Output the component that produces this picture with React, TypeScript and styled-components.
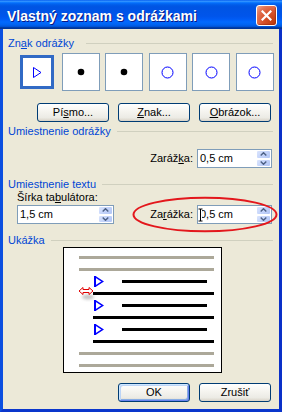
import React from 'react';
import styled, { createGlobalStyle, css } from 'styled-components';

const Global = createGlobalStyle`
  html, body { margin: 0; padding: 0; background: #ECE9D8; overflow: hidden; }
  body { font-family: "Liberation Sans", Arial, sans-serif; font-size: 11px; }
  * { box-sizing: border-box; }
`;

const Window = styled.div`
  position: relative;
  width: 282px;
  height: 412px;
  display: flex;
  flex-direction: column;
  font-family: "Liberation Sans", Arial, sans-serif;
  font-size: 11px;
  color: #000;
  overflow: hidden;
`;

const TitleBar = styled.div`
  height: 29px;
  flex: none;
  display: flex;
  align-items: flex-start;
  justify-content: space-between;
  padding: 0 5px 0 7px;
  background: linear-gradient(
    to bottom,
    #0058ee 0%, #3593ff 4%, #288eff 6%, #127dff 8%, #036ffc 10%,
    #0262ee 14%, #0057e5 20%, #0054e3 24%, #0055eb 56%, #005bf5 66%,
    #026afe 76%, #0062ef 86%, #0052d6 92%, #0040ab 94%, #003092 100%
  );
`;

const TitleText = styled.span`
  margin-top: 8px;
  color: #fff;
  font-weight: bold;
  font-size: 14px;
  line-height: 16px;
  white-space: nowrap;
  text-shadow: 1px 1px 0 #0a1883;
`;

const CloseButton = styled.div`
  margin-top: 5px;
  width: 21px;
  height: 21px;
  flex: none;
  border: 1px solid #fff;
  border-radius: 3px;
  display: flex;
  align-items: center;
  justify-content: center;
  background: radial-gradient(circle at 85% 85%, #c23d10 0%, #d9532c 45%, #e27556 75%, #f0ab96 100%);
  box-shadow: inset -1px -1px 1px rgba(120, 20, 0, 0.4);
`;

const Body = styled.div`
  flex: 1;
  display: flex;
  flex-direction: column;
  background: #ece9d8;
  border-left: 3px solid #0b4fe0;
  border-right: 3px solid #0a30c8;
  border-bottom: 3px solid #0a36cc;
  padding: 0 6px 0 5px;
`;

const GroupHeader = styled.div<{ $mt: number }>`
  display: flex;
  align-items: flex-start;
  height: 14px;
  margin-top: ${(p) => p.$mt}px;
`;

const GroupLabel = styled.span`
  color: #0046d5;
  line-height: 14px;
  white-space: nowrap;
`;

const GroupRule = styled.div<{ $gap: number }>`
  flex: 1;
  height: 1px;
  margin-top: 7px;
  margin-left: ${(p) => p.$gap}px;
  background: #d0d0bf;
`;

const Key = styled.span`
  text-decoration: underline;
  text-underline-offset: 1px;
`;

const BulletRow = styled.div`
  display: flex;
  gap: 5.5px;
  margin: 3px 0 0 10px;
`;

const BulletCell = styled.div<{ $selected?: boolean }>`
  width: 38px;
  height: 38px;
  flex: none;
  display: flex;
  align-items: center;
  justify-content: center;
  background: #fff;
  border: 1px solid #7f9db9;
  ${(p) =>
    p.$selected &&
    css`
      width: 34px;
      height: 34px;
      margin: 2px;
      border: 3px solid #316ac5;
    `}
`;

const ButtonRow = styled.div<{ $mt: number }>`
  display: flex;
  justify-content: flex-end;
  gap: 9px;
  padding-right: 2px;
  margin-top: ${(p) => p.$mt}px;
`;

const XPButton = styled.div<{ $default?: boolean }>`
  width: 72px;
  height: 19px;
  flex: none;
  border: 1px solid #003c74;
  border-radius: 3px;
  display: flex;
  align-items: center;
  justify-content: center;
  line-height: 17px;
  color: #000;
  white-space: nowrap;
  background: linear-gradient(180deg, #ffffff 0%, #f5f4ef 45%, #ecebe5 80%, #d8d2c6 100%);
  ${(p) =>
    p.$default &&
    css`
      box-shadow: inset 1px 1px 0 #cee7ff, inset -1px -1px 0 #6982ee, inset 2px 2px 0 #bcd4f6, inset -2px -2px 0 #89ade4;
    `}
`;

const FieldRow = styled.div<{ $mt?: number }>`
  display: flex;
  flex: none;
  align-items: center;
  justify-content: flex-end;
  gap: 4px;
  padding-right: 1px;
  margin-top: ${(p) => p.$mt ?? 0}px;
`;

const FieldLabel = styled.span`
  flex: none;
  line-height: 13px;
  white-space: nowrap;
`;

const SpinBox = styled.div<{ $w: number }>`
  width: ${(p) => p.$w}px;
  height: 19px;
  flex: none;
  display: flex;
  border: 1px solid #7f9db9;
  background: #fff;
`;

const SpinValue = styled.div`
  position: relative;
  flex: 1;
  padding-left: 2px;
  line-height: 17px;
  white-space: nowrap;
`;

const SpinArrows = styled.div`
  width: 15px;
  flex: none;
  display: flex;
  flex-direction: column;
`;

const SpinArrow = styled.div`
  flex: 1;
  display: flex;
  align-items: center;
  justify-content: center;
  border: 1px solid #fff;
  border-radius: 2px;
  background: linear-gradient(135deg, #dbe5fd 0%, #c3d3fa 50%, #b1c5f5 100%);
`;

const TextSection = styled.div`
  display: flex;
  align-items: flex-end;
  justify-content: space-between;
`;

const TabColumn = styled.div`
  display: flex;
  flex: none;
  flex-direction: column;
  gap: 1px;
  margin-left: 9px;
`;

const Preview = styled.div`
  position: relative;
  width: 159px;
  height: 126px;
  flex: none;
  margin-left: 55px;
  border: 1px solid #000;
  background: #fff;
  display: flex;
  flex-direction: column;
  gap: 9px;
  padding-top: 8px;
`;

const PLine = styled.div<{ $left: number; $width: number; $gray?: boolean }>`
  height: 3px;
  flex: none;
  margin-left: ${(p) => p.$left}px;
  width: ${(p) => p.$width}px;
  background: ${(p) => (p.$gray ? '#aca899' : '#000')};
`;

const BulletLine = styled.div`
  height: 3px;
  flex: none;
  display: flex;
  align-items: center;
`;

const PreviewBullet = styled.svg`
  flex: none;
  margin-left: 30px;
  margin-right: 18px;
`;

const ResizeCursor = styled.svg`
  position: absolute;
  left: 14px;
  top: 38px;
`;

const IBeam = styled.svg`
  position: absolute;
  left: 0;
  top: 2px;
`;

const Highlight = styled.svg`
  position: absolute;
  left: 132px;
  top: 196px;
`;

const Triangle = () => (
  <svg width="10" height="11" viewBox="0 0 10 11">
    <path d="M1.5 0.5 V10.5 L9 5.5 Z" fill="none" stroke="#0000ff" strokeWidth="1" />
  </svg>
);

const Dot = () => (
  <svg width="8" height="8" viewBox="0 0 8 8">
    <circle cx="4" cy="4" r="3.3" fill="#000" />
  </svg>
);

const Ring = () => (
  <svg width="13" height="13" viewBox="0 0 13 13">
    <circle cx="6.5" cy="6.5" r="5.5" fill="none" stroke="#0000ff" strokeWidth="1" />
  </svg>
);

const Spinner = ({ value, width, cursor }: { value: string; width: number; cursor?: boolean }) => (
  <SpinBox $w={width}>
    <SpinValue>
      {value}
      {cursor && (
        <IBeam width="7" height="14" viewBox="0 0 7 14">
          <rect x="0" y="0" width="4" height="14" fill="#fff" />
          <path d="M0.5 1 H2.5 M4.5 1 H2.5 V13 M0.5 13 H4.5" stroke="#000" strokeWidth="1" fill="none" />
        </IBeam>
      )}
    </SpinValue>
    <SpinArrows>
      <SpinArrow>
        <svg width="7" height="4" viewBox="0 0 7 4">
          <path d="M0.7 3.5 L3.5 0.7 L6.3 3.5" stroke="#4d6185" strokeWidth="1.4" fill="none" />
        </svg>
      </SpinArrow>
      <SpinArrow>
        <svg width="7" height="4" viewBox="0 0 7 4">
          <path d="M0.7 0.5 L3.5 3.3 L6.3 0.5" stroke="#4d6185" strokeWidth="1.4" fill="none" />
        </svg>
      </SpinArrow>
    </SpinArrows>
  </SpinBox>
);

const BulletItem = () => (
  <BulletLine>
    <PreviewBullet width="10" height="11" viewBox="0 0 10 11">
      <path d="M1 0 V11" stroke="#0000ff" strokeWidth="2" />
      <path d="M1.5 0.8 L8.8 5.5 L1.5 10.2" stroke="#0000ff" strokeWidth="1.5" fill="none" />
    </PreviewBullet>
    <PLine $left={0} $width={85} />
  </BulletLine>
);

export default function App() {
  return (
    <Window>
      <Global />
      <TitleBar>
        <TitleText>Vlastný zoznam s odrážkami</TitleText>
        <CloseButton>
          <svg width="11" height="11" viewBox="0 0 11 11">
            <path d="M1.5 1.5 L9.5 9.5 M9.5 1.5 L1.5 9.5" stroke="#fff" strokeWidth="2.2" strokeLinecap="square" />
          </svg>
        </CloseButton>
      </TitleBar>
      <Body>
        <GroupHeader $mt={7}>
          <GroupLabel>
            Zn<Key>a</Key>k odrážky
          </GroupLabel>
          <GroupRule $gap={12} />
        </GroupHeader>
        <BulletRow>
          <BulletCell $selected>
            <Triangle />
          </BulletCell>
          <BulletCell>
            <Dot />
          </BulletCell>
          <BulletCell>
            <Dot />
          </BulletCell>
          <BulletCell>
            <Ring />
          </BulletCell>
          <BulletCell>
            <Ring />
          </BulletCell>
          <BulletCell>
            <Ring />
          </BulletCell>
        </BulletRow>
        <ButtonRow $mt={12}>
          <XPButton>
            Pí<Key>s</Key>mo...
          </XPButton>
          <XPButton>
            <Key>Z</Key>nak...
          </XPButton>
          <XPButton>
            <Key>O</Key>brázok...
          </XPButton>
        </ButtonRow>
        <GroupHeader $mt={2}>
          <GroupLabel>Umiestnenie odrážky</GroupLabel>
          <GroupRule $gap={6} />
        </GroupHeader>
        <FieldRow $mt={11}>
          <FieldLabel>
            Zaráž<Key>k</Key>a:
          </FieldLabel>
          <Spinner value="0,5 cm" width={75} />
        </FieldRow>
        <GroupHeader $mt={9}>
          <GroupLabel>Umiestnenie textu</GroupLabel>
          <GroupRule $gap={6} />
        </GroupHeader>
        <TextSection>
          <TabColumn>
            <FieldLabel>
              Šírka ta<Key>b</Key>ulátora:
            </FieldLabel>
            <Spinner value="1,5 cm" width={97} />
          </TabColumn>
          <FieldRow>
            <FieldLabel>
              Za<Key>r</Key>ážka:
            </FieldLabel>
            <Spinner value="0,5 cm" width={75} cursor />
          </FieldRow>
        </TextSection>
        <GroupHeader $mt={9}>
          <GroupLabel>Ukážka</GroupLabel>
          <GroupRule $gap={6} />
        </GroupHeader>
        <Preview>
          <PLine $left={15} $width={135} $gray />
          <PLine $left={15} $width={135} $gray />
          <BulletItem />
          <PLine $left={29} $width={121} />
          <BulletItem />
          <PLine $left={29} $width={121} />
          <BulletItem />
          <PLine $left={29} $width={121} />
          <PLine $left={15} $width={135} $gray />
          <PLine $left={15} $width={135} $gray />
          <ResizeCursor width="20" height="16" viewBox="0 0 20 16">
            <defs>
              <filter id="sh" x="-50%" y="-50%" width="200%" height="200%">
                <feGaussianBlur stdDeviation="1.6" />
              </filter>
            </defs>
            <ellipse cx="10" cy="11" rx="6" ry="2.5" fill="#7a7a7a" opacity="0.45" filter="url(#sh)" />
            <path
              d="M1 5 L5 1.5 V3.5 H11 V1.5 L15 5 L11 8.5 V6.5 H5 V8.5 Z"
              fill="#fff"
              stroke="#e00000"
              strokeWidth="1"
              strokeLinejoin="miter"
            />
          </ResizeCursor>
        </Preview>
        <ButtonRow $mt={10}>
          <XPButton $default>OK</XPButton>
          <XPButton>Zrušiť</XPButton>
        </ButtonRow>
      </Body>
      <Highlight width="146" height="37" viewBox="0 0 146 37">
        <ellipse cx="73" cy="18.5" rx="71.5" ry="16.8" fill="none" stroke="#e3171c" strokeWidth="2" />
      </Highlight>
    </Window>
  );
}
